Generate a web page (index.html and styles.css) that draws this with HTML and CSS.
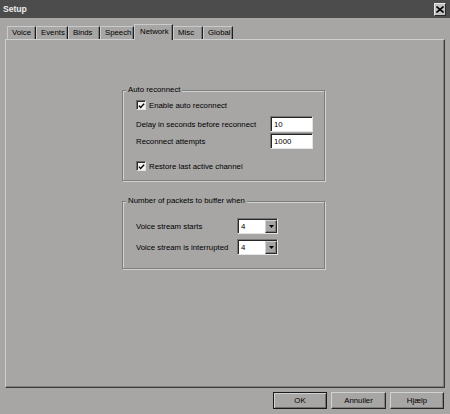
FILE: index.html
```html
<!DOCTYPE html>
<html>
<head>
<meta charset="utf-8">
<title>Setup</title>
<link rel="stylesheet" href="styles.css">
</head>
<body>
<div class="titlebar">
  <span class="title">Setup</span>
  <span class="close"><svg width="8" height="7" viewBox="0 0 8 7"><path d="M0.5 0.5 L7.5 6.5 M7.5 0.5 L0.5 6.5" stroke="#000" stroke-width="1.6" fill="none"/></svg></span>
</div>
<div class="tabs">
  <div class="tab w-voice">Voice</div>
  <div class="tab w-events">Events</div>
  <div class="tab w-binds">Binds</div>
  <div class="tab w-speech">Speech</div>
  <div class="tab active w-network">Network</div>
  <div class="tab w-misc">Misc</div>
  <div class="tab w-global">Global</div>
</div>
<div class="panel">
  <div class="group g1">
    <div class="legend">Auto reconnect</div>
    <div class="check-row r-enable">
      <span class="cb"><svg width="8" height="8" viewBox="0 0 8 8"><path d="M1 3.6 L3 5.8 L7 1.4" stroke="#000" stroke-width="1.6" fill="none"/></svg></span>
      <span>Enable auto reconnect</span>
    </div>
    <div class="field-row r-delay">
      <span>Delay in seconds before reconnect</span>
      <span class="input">10</span>
    </div>
    <div class="field-row r-attempts">
      <span>Reconnect attempts</span>
      <span class="input">1000</span>
    </div>
    <div class="check-row r-restore">
      <span class="cb"><svg width="8" height="8" viewBox="0 0 8 8"><path d="M1 3.6 L3 5.8 L7 1.4" stroke="#000" stroke-width="1.6" fill="none"/></svg></span>
      <span>Restore last active channel</span>
    </div>
  </div>
  <div class="group g2">
    <div class="legend">Number of packets to buffer when</div>
    <div class="combo-row r-starts">
      <span>Voice stream starts</span>
      <span class="combo"><span class="combo-val">4</span><span class="combo-btn"><svg width="5" height="3" viewBox="0 0 5 3"><path d="M0 0 H5 L2.5 3 Z" fill="#000"/></svg></span></span>
    </div>
    <div class="combo-row r-interrupted">
      <span>Voice stream is interrupted</span>
      <span class="combo"><span class="combo-val">4</span><span class="combo-btn"><svg width="5" height="3" viewBox="0 0 5 3"><path d="M0 0 H5 L2.5 3 Z" fill="#000"/></svg></span></span>
    </div>
  </div>
</div>
<div class="buttons">
  <div class="btn btn-default">OK</div>
  <div class="btn w-cancel">Annuller</div>
  <div class="btn">Hjælp</div>
</div>
</body>
</html>
```
FILE: styles.css
```css
* { box-sizing: border-box; }
html, body { margin: 0; padding: 0; }
body {
  width: 450px;
  height: 414px;
  overflow: hidden;
  background: #a7a6a5;
  font-family: "Liberation Sans", Arial, sans-serif;
  font-size: 7.8px;
  color: #000;
}

/* title bar */
.titlebar {
  height: 18px;
  background: #4c4c4c;
  display: flex;
  align-items: center;
  padding: 0 4px 0 3px;
}
.title {
  font-weight: bold;
  font-size: 8.6px;
  color: #ececec;
}
.close {
  margin-left: auto;
  width: 12px;
  height: 13px;
  background: #c3c3c3;
  display: flex;
  align-items: center;
  justify-content: center;
  border-top: 1px solid #e8e8e8;
  border-left: 1px solid #e8e8e8;
  border-right: 1px solid #2a2a2a;
  border-bottom: 1px solid #2a2a2a;
}

/* tabs */
.tabs {
  display: flex;
  align-items: flex-end;
  height: 15px;
  margin-top: 6px;
  padding-left: 7px;
}
.tab {
  height: 13px;
  line-height: 11px;
  padding-left: 4px;
  border-top: 1px solid #c9cccc;
  border-left: 1px solid #c9cccc;
  border-right: 1px solid #1e1e1e;
  box-shadow: inset -1px 0 0 #7d7d7d;
  white-space: nowrap;
}
.tab.active {
  height: 16px;
  line-height: 13px;
  margin-bottom: -1px;
  position: relative;
  z-index: 1;
  background: #a7a6a5;
  padding-left: 5px;
}
.w-voice { width: 29px; }
.w-events { width: 32px; }
.w-binds { width: 32px; }
.w-speech { width: 34px; }
.w-network { width: 39px; }
.w-misc { width: 30px; }
.w-global { width: 30px; }

/* panel */
.panel {
  margin: 0 5px;
  height: 349px;
  border-top: 1px solid #cdd0d0;
  border-left: 1px solid #cdd0d0;
  border-right: 1px solid #3a3a3a;
  border-bottom: 1px solid #3a3a3a;
  box-shadow: inset -1px -1px 0 #7e7e7e;
  padding: 50px 0 0 116px;
}

/* group boxes */
.group {
  width: 203px;
  border: 1px solid #7d7d7d;
  box-shadow: 1px 1px 0 #d0d3d3, inset 1px 1px 0 #d0d3d3;
  padding: 0 11px 8px 13px;
}
.g2 {
  margin-top: 20px;
  padding-bottom: 13px;
}
.legend {
  width: fit-content;
  margin: -6px 0 0 -10px;
  padding: 0 2px;
  line-height: 10px;
  height: 10px;
  background: #a7a6a5;
  white-space: nowrap;
}

.check-row {
  display: flex;
  align-items: center;
  height: 12px;
}
.r-enable { margin-top: 4px; }
.r-restore { margin-top: 11px; }
.cb {
  width: 10px;
  height: 10px;
  margin-right: 3px;
  background: #f2f2f2;
  border-top: 1px solid #6a6a6a;
  border-left: 1px solid #6a6a6a;
  border-right: 1px solid #e2e2e2;
  border-bottom: 1px solid #e2e2e2;
  box-shadow: inset 1px 1px 0 #2c2c2c;
  display: flex;
  align-items: center;
  justify-content: center;
  padding: 1px 0 0 1px;
}

.field-row {
  display: flex;
  align-items: center;
  height: 16px;
  white-space: nowrap;
}
.r-delay { margin-top: 5px; }
.r-attempts { margin-top: 1px; }
.input {
  margin-left: auto;
  width: 43px;
  height: 16px;
  background: #fff;
  border-top: 1px solid #777;
  border-left: 1px solid #777;
  border-right: 1px solid #e4e4e4;
  border-bottom: 1px solid #e4e4e4;
  box-shadow: inset 1px 1px 0 #262626;
  padding: 2px 0 0 3px;
  line-height: 11px;
}

.combo-row {
  display: grid;
  grid-template-columns: 101px 41px;
  align-items: center;
  height: 16px;
  white-space: nowrap;
}
.r-starts { margin-top: 12px; }
.r-interrupted { margin-top: 5px; }
.combo {
  display: flex;
  width: 41px;
  height: 16px;
  background: #fff;
  border-top: 1px solid #777;
  border-left: 1px solid #777;
  border-right: 1px solid #e4e4e4;
  border-bottom: 1px solid #e4e4e4;
  box-shadow: inset 1px 1px 0 #262626;
  padding: 1px 0 0 1px;
}
.combo-val {
  flex: 1;
  padding: 1px 0 0 2px;
  line-height: 11px;
}
.combo-btn {
  width: 12px;
  height: 13px;
  background: #a7a6a5;
  border-top: 1px solid #d0d3d3;
  border-left: 1px solid #d0d3d3;
  border-right: 1px solid #2a2a2a;
  border-bottom: 1px solid #2a2a2a;
  box-shadow: inset -1px -1px 0 #7e7e7e;
  display: flex;
  align-items: center;
  justify-content: center;
}

/* buttons */
.buttons {
  display: flex;
  justify-content: flex-end;
  gap: 4px;
  margin-top: 4px;
  padding-right: 6px;
}
.btn {
  width: 54px;
  height: 17px;
  border-top: 1px solid #d0d3d3;
  border-left: 1px solid #d0d3d3;
  border-right: 1px solid #262626;
  border-bottom: 1px solid #262626;
  box-shadow: inset -1px -1px 0 #7e7e7e;
  display: flex;
  align-items: center;
  justify-content: center;
}
.btn-default {
  border: 1px solid #1a1a1a;
  box-shadow: inset 1px 1px 0 #d0d3d3, inset -1px -1px 0 #6e6e6e;
}
.w-cancel { width: 55px; }
```
